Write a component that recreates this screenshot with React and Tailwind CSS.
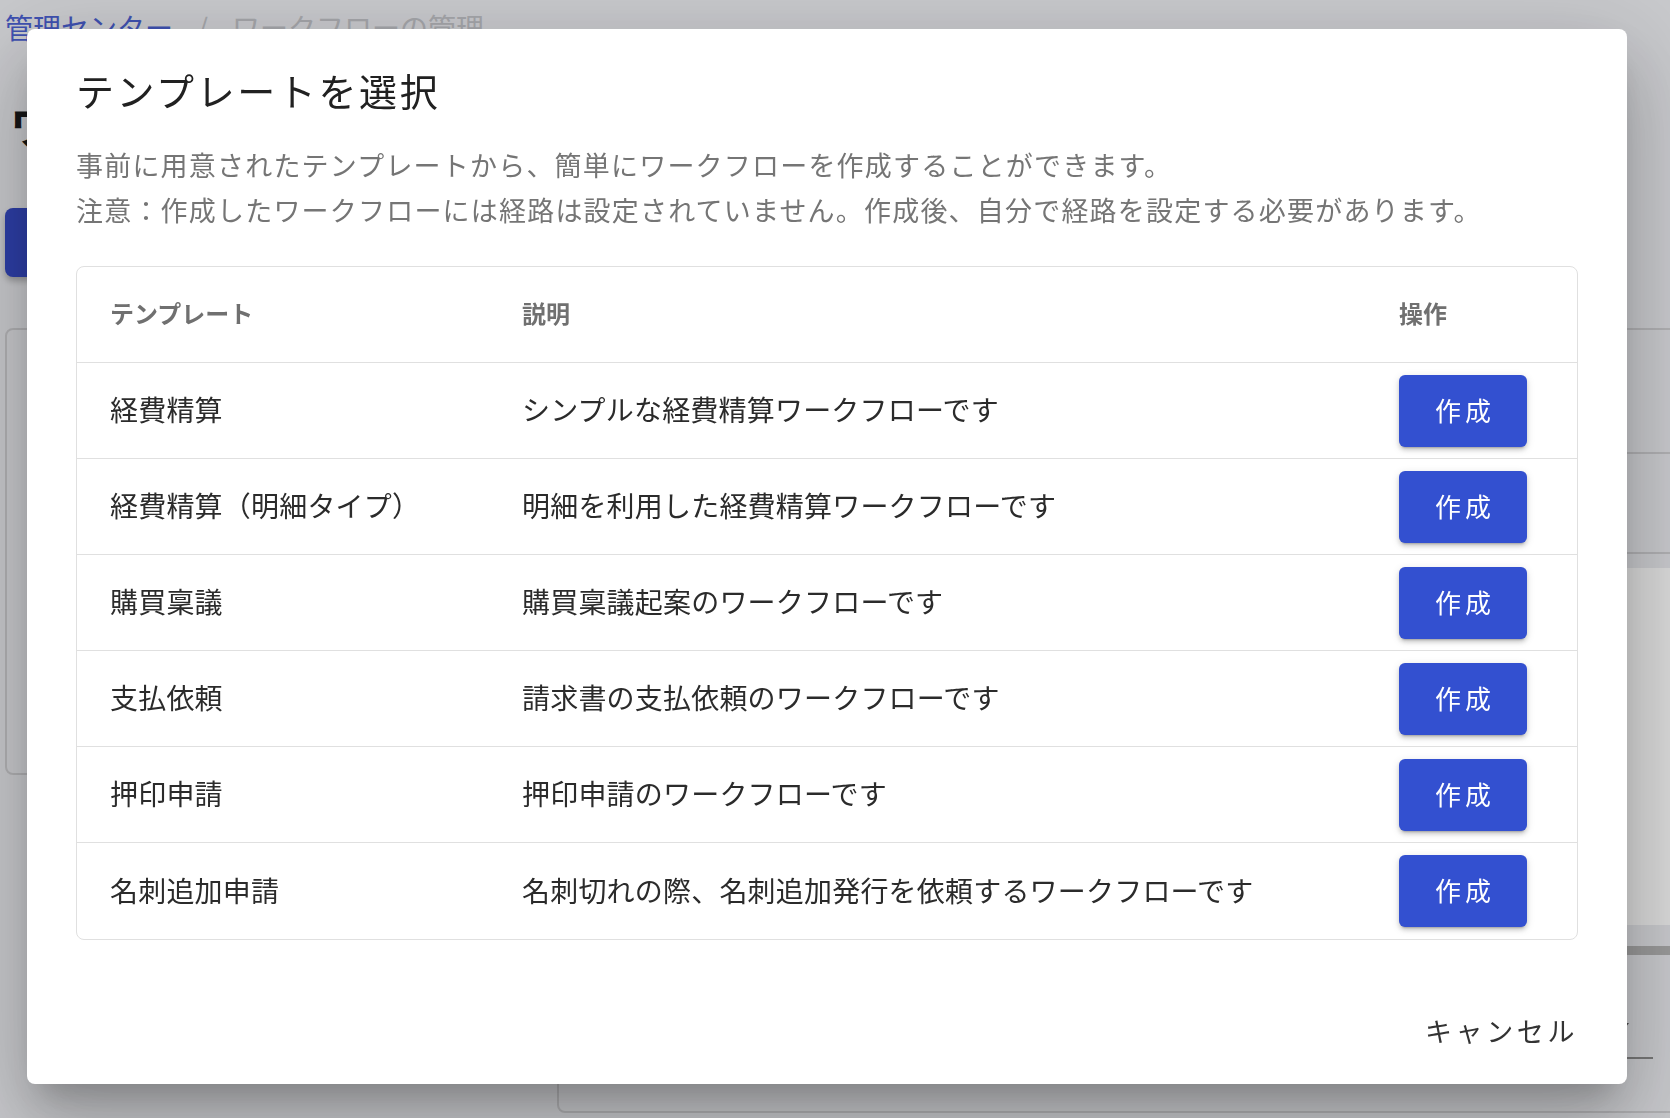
import React from "react";

const rows = [
  ["経費精算", "シンプルな経費精算ワークフローです"],
  ["経費精算（明細タイプ）", "明細を利用した経費精算ワークフローです"],
  ["購買稟議", "購買稟議起案のワークフローです"],
  ["支払依頼", "請求書の支払依頼のワークフローです"],
  ["押印申請", "押印申請のワークフローです"],
  ["名刺追加申請", "名刺切れの際、名刺追加発行を依頼するワークフローです"],
];

const font = { fontFamily: '"Noto Sans CJK JP", Roboto, "Noto Sans", sans-serif' };

function BackgroundPage() {
  return (
    <div className="min-h-screen w-full overflow-hidden bg-[#ebecf0]" style={font}>
      <div className="pl-[5px] pt-[11px]">
        <div className="flex items-center text-[28px] leading-[32px]">
          <span className="text-[#4a5fcf]">管理センター</span>
          <span className="mx-[24px] text-[#c2c3c8]">/</span>
          <span className="text-[#c2c3c8]">ワークフローの管理</span>
        </div>
        <div className="mt-[54px] pl-[5px] text-[44px] font-bold leading-[56px] text-[#1a1a1a]">
          ワークフローの管理
        </div>
        <div className="mt-[55px] h-[69px] w-[230px] rounded-[8px] bg-[#3549c3] shadow-[0_4px_6px_rgba(0,0,0,0.25)]" />
        <div className="mt-[51px] flex items-start gap-[12px]">
          <div className="h-[447px] w-[540px] shrink-0 rounded-[8px] border-2 border-[#cfcfd2]" />
          <div className="flex h-[785px] w-[1300px] shrink-0 flex-col rounded-[8px] border-2 border-[#cfcfd2]">
            <div className="h-[124px] shrink-0 border-b-2 border-[#cfcfd2]" />
            <div className="h-[100px] shrink-0 border-b-2 border-[#cfcfd2]" />
            <div className="mt-[14px] h-[357px] shrink-0 bg-white" />
            <div className="mt-[21px] h-[9px] shrink-0 bg-[#b4b4b4]" />
            <div className="mt-[60px] ml-[1040px] flex h-[44px] w-[54px] items-start justify-end border-b-2 border-[#8c8c8c]">
              <svg width="14" height="9" viewBox="0 0 14 9" className="mt-[8px] mr-[24px]">
                <path d="M0 0 L14 0 L7 9 Z" fill="#555" />
              </svg>
            </div>
          </div>
        </div>
      </div>
    </div>
  );
}

export default function App() {
  return (
    <div className="relative h-[1118px] w-full overflow-hidden" style={font}>
      <BackgroundPage />
      <div className="fixed inset-0 bg-[rgba(0,0,0,0.15)]">
        <div className="absolute left-[27px] top-[29px] flex h-[1055px] w-[1600px] flex-col rounded-[8px] bg-white px-[49px] shadow-[0_22px_30px_-14px_rgba(0,0,0,0.2),0_48px_76px_6px_rgba(0,0,0,0.14),0_18px_92px_16px_rgba(0,0,0,0.12)]">
          <h2 className="pt-[37px] text-[38px] font-normal leading-[48px] tracking-[2.6px] text-[#212121]">
            テンプレートを選択
          </h2>
          <div className="mt-[28px] text-[27px] leading-[45px] tracking-[1.2px] text-[#757575]">
            <p>事前に用意されたテンプレートから、簡単にワークフローを作成することができます。</p>
            <p>注意：作成したワークフローには経路は設定されていません。作成後、自分で経路を設定する必要があります。</p>
          </div>
          <div className="mt-[34px] overflow-hidden rounded-[8px] border border-[#e0e0e0]">
            <div className="grid h-[96px] grid-cols-[412px_877px_1fr] items-center border-b border-[#e0e0e0] text-[24px] font-bold text-[#707070]">
              <div className="pl-[33px] pb-[3px]">テンプレート</div>
              <div className="pl-[33px] pb-[3px]">説明</div>
              <div className="pl-[33px] pb-[3px]">操作</div>
            </div>
            {rows.map(([name, desc], i) => (
              <div
                key={name}
                className={
                  "grid h-[96px] grid-cols-[412px_877px_1fr] items-center text-[28px] tracking-[0.2px] text-[#2b2b2b] " +
                  (i < rows.length - 1 ? "border-b border-[#e0e0e0]" : "")
                }
              >
                <div className="pl-[33px] pb-[3px] whitespace-nowrap">{name}</div>
                <div className="pl-[33px] pb-[3px] whitespace-nowrap">{desc}</div>
                <div className="pl-[33px]">
                  <button className="flex h-[72px] w-[128px] items-center justify-center rounded-[6px] bg-[#3350d0] pl-[4px] pb-[3px] text-[26px] tracking-[4px] text-white shadow-[0_4px_2px_-3px_rgba(0,0,0,0.2),0_3px_4px_0_rgba(0,0,0,0.14),0_2px_8px_0_rgba(0,0,0,0.12)]">
                    作成
                  </button>
                </div>
              </div>
            ))}
          </div>
          <div className="mt-auto flex justify-end pb-[21px]">
            <button className="h-[60px] pb-[3px] text-[27px] tracking-[3.6px] text-[#333333]">キャンセル</button>
          </div>
        </div>
      </div>
    </div>
  );
}
